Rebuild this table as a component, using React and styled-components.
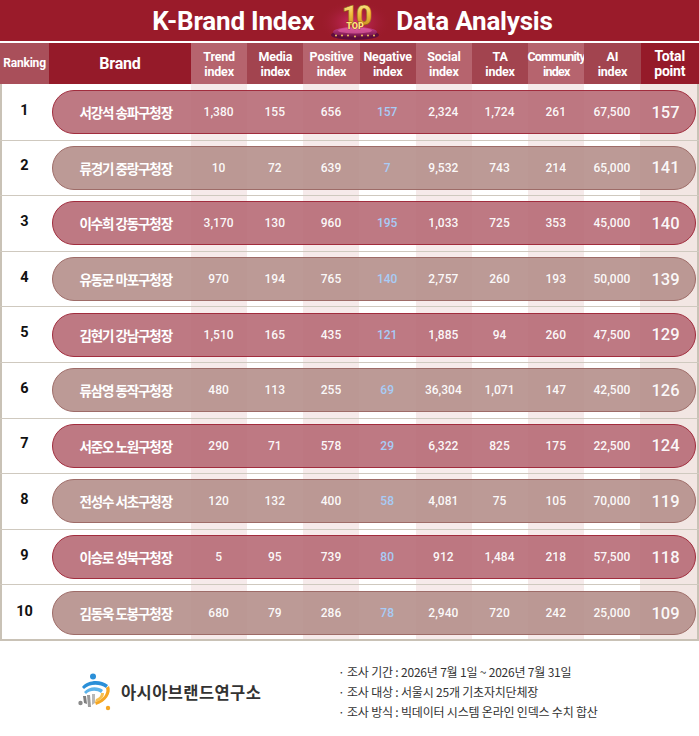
import React from "react";
import styled, { createGlobalStyle } from "styled-components";

const GlobalStyle = createGlobalStyle`
  body {
    margin: 0;
    background: #fff;
    font-family: Roboto, "Noto Sans CJK KR", sans-serif;
  }
`;

const STRIPES = [
  [0, 191, "#ffffff"],
  [191, 247, "#f6eaea"],
  [247, 303, "#ffffff"],
  [303, 359, "#f6eaea"],
  [359, 416, "#ffffff"],
  [416, 472, "#f6eaea"],
  [472, 528, "#ffffff"],
  [528, 584, "#f6eaea"],
  [584, 640, "#ffffff"],
  [640, 699, "#f2e6e3"],
];

const stripeGradient = () =>
  `linear-gradient(to right, ${STRIPES.map(
    ([a, b, c]) => `${c} ${a}px, ${c} ${b}px`
  ).join(", ")})`;

const HEAD_TONES = {
  rank: "#a94f5a",
  brand: "#951a29",
  light: "#b6646e",
  dark: "#a2444f",
  total: "#951a29",
};

const PILL = {
  odd: { bg: "rgba(183, 106, 117, 0.9)", border: "#a12d3e" },
  even: { bg: "rgba(181, 143, 139, 0.9)", border: "#9e6c68" },
};

const Page = styled.div`
  width: 699px;
  background: #fff;
`;

const TitleBar = styled.div`
  height: 41px;
  background: #9a1b2a;
  border-bottom: 2px solid #fff;
  display: flex;
  align-items: center;
  justify-content: center;
  gap: 8px;
  padding-left: 6px;
`;

const TitleText = styled.h1`
  margin: 0;
  color: #fff;
  font-family: Roboto, sans-serif;
  font-size: 26px;
  font-weight: 700;
  letter-spacing: -0.2px;
  line-height: 1;
`;

const HeaderRow = styled.div`
  display: grid;
  grid-template-columns: 49px 142px repeat(8, 56.2px) 1fr;
  height: 41px;
`;

const HeaderCell = styled.div`
  background: ${(p) => HEAD_TONES[p.$tone]};
  color: #fff;
  display: flex;
  align-items: center;
  justify-content: center;
  text-align: center;
  font-size: ${(p) => (p.$tone === "brand" ? "16px" : p.$tone === "total" ? "14px" : p.$tone === "rank" ? "12px" : "12.5px")};
  font-weight: 700;
  line-height: 15px;
  letter-spacing: ${(p) => (p.$tight ? "-0.8px" : "-0.2px")};
  white-space: pre-line;
`;

const Body = styled.div`
  background: ${stripeGradient};
  box-shadow: inset 2px 0 #c9c2b6, inset -2px 0 #c9c2b6, inset 0 -2px #c9c2b6;
  padding-top: 1px;
`;

const Row = styled.div`
  display: flex;
  align-items: center;
  height: 55.6px;
  box-sizing: border-box;
  border-bottom: 1.5px solid #cfc9bf;
  &:last-child {
    border-bottom: none;
  }
`;

const RankCell = styled.div`
  width: 49px;
  text-align: center;
  font-size: 14.5px;
  font-weight: 700;
  color: #111;
  padding-bottom: 4px;
`;

const Pill = styled.div`
  flex: 1;
  height: 44px;
  margin: 0 3px 0 3px;
  box-sizing: border-box;
  border-radius: 22px;
  border: 1.5px solid ${(p) => PILL[p.$variant].border};
  background: ${(p) => PILL[p.$variant].bg};
  display: grid;
  grid-template-columns: 137.5px repeat(8, 56.2px) 1fr;
  align-items: center;
  overflow: hidden;
`;

const BrandName = styled.div`
  text-align: center;
  color: #fff;
  font-family: "Noto Sans CJK KR", sans-serif;
  font-size: 13.5px;
  font-weight: 700;
  letter-spacing: -1.1px;
  padding-left: 8px;
`;

const Value = styled.div`
  text-align: center;
  color: ${(p) => (p.$negative ? "#a8ccf6" : "rgba(255,255,255,0.96)")};
  font-size: ${(p) => (p.$total ? "16.5px" : "12px")};
  font-weight: 500;
  padding-right: ${(p) => (p.$total ? "4px" : "0")};
`;

const Footer = styled.div`
  height: 96px;
  display: flex;
  align-items: center;
  padding: 6px 0 0 78px;
  box-sizing: border-box;
`;

const Brandmark = styled.div`
  width: 260px;
  display: flex;
  align-items: center;
  gap: 7px;
`;

const BrandmarkText = styled.span`
  font-family: "Noto Sans CJK KR", sans-serif;
  font-size: 16.5px;
  font-weight: 700;
  color: #333;
  letter-spacing: 0.4px;
`;

const Notes = styled.ul`
  margin: 0;
  padding: 0;
  list-style: none;
`;

const Note = styled.li`
  font-family: "Noto Sans CJK KR", sans-serif;
  font-size: 12px;
  line-height: 20px;
  color: #333;
  letter-spacing: -0.2px;
`;

const TopTen = () => (
  <svg width="66" height="41" viewBox="0 0 66 41">
    <defs>
      <radialGradient id="glow" cx="50%" cy="55%" r="55%">
        <stop offset="0%" stopColor="#e0307f" stopOpacity="0.85" />
        <stop offset="100%" stopColor="#9a1b2a" stopOpacity="0" />
      </radialGradient>
      <linearGradient id="gold" x1="0" y1="0" x2="0" y2="1">
        <stop offset="0%" stopColor="#fff6b0" />
        <stop offset="45%" stopColor="#f0c040" />
        <stop offset="100%" stopColor="#b87a14" />
      </linearGradient>
      <linearGradient id="ped" x1="0" y1="0" x2="0" y2="1">
        <stop offset="0%" stopColor="#d04590" />
        <stop offset="100%" stopColor="#6c0f45" />
      </linearGradient>
    </defs>
    <rect x="0" y="0" width="66" height="41" fill="url(#glow)" />
    <ellipse cx="33" cy="35" rx="24" ry="5" fill="#5e0c3c" />
    <ellipse cx="33" cy="32" rx="22" ry="5" fill="url(#ped)" />
    <ellipse cx="33" cy="30.5" rx="17" ry="3" fill="#e864a8" opacity="0.6" />
    {[14, 20, 26, 33, 40, 46, 52].map((x) => (
      <circle key={x} cx={x} cy={x === 33 ? 36.5 : 35.5} r="0.9" fill="#ffd860" />
    ))}
    <text
      x="34"
      y="25"
      textAnchor="middle"
      fontFamily="Roboto, sans-serif"
      fontWeight="900"
      fontSize="28"
      fill="url(#gold)"
      stroke="#8a5410"
      strokeWidth="0.5"
      letterSpacing="-2"
    >
      10
    </text>
    <text
      x="33"
      y="29"
      textAnchor="middle"
      fontFamily="Roboto, sans-serif"
      fontWeight="900"
      fontSize="9"
      fill="#ffe27a"
      stroke="#7a1020"
      strokeWidth="0.6"
      paintOrder="stroke"
    >
      TOP
    </text>
  </svg>
);

const InstituteLogo = () => (
  <svg width="36" height="38" viewBox="0 0 36 38">
    <circle cx="15" cy="3.5" r="3" fill="#2a8fd8" />
    <path d="M4 14 C 10 7, 22 6, 30 12 L 28 15 C 21 10, 11 11, 6 16 Z" fill="#2a8fd8" />
    <path d="M6 19 C 11 13, 20 13, 25 17 L 23 20 C 19 17, 12 17, 8 21 Z" fill="#5cb3ea" />
    <path d="M31 13 C 34 20, 28 29, 18 32 L 17 29 C 25 27, 30 20, 28 15 Z" fill="#f5a623" />
    <path d="M26 20 C 26 25, 22 28, 17 29 L 18 26 C 21 25, 23 23, 23 20 Z" fill="#f8c050" />
    <path d="M9 22 L 12 22 L 13 34 L 10 34 Z" fill="#9c9c9c" />
    <path d="M14 21 L 17 21 L 17 30 L 14 32 Z" fill="#b8b8b8" />
    <path d="M5 23 L 8 23 L 9 31 L 6 30 Z" fill="#7e7e7e" />
    <circle cx="2.5" cy="30" r="2.2" fill="#8a8a8a" />
    <circle cx="30" cy="35" r="2.2" fill="#f5a623" />
  </svg>
);

const HEADERS = [
  { label: "Ranking", tone: "rank" },
  { label: "Brand", tone: "brand" },
  { label: "Trend\nindex", tone: "light" },
  { label: "Media\nindex", tone: "dark" },
  { label: "Positive\nindex", tone: "light" },
  { label: "Negative\nindex", tone: "dark" },
  { label: "Social\nindex", tone: "light" },
  { label: "TA\nindex", tone: "dark" },
  { label: "Community\nindex", tone: "light", tight: true },
  { label: "AI\nindex", tone: "dark" },
  { label: "Total\npoint", tone: "total" },
];

const ROWS = [
  ["서강석 송파구청장", "1,380", "155", "656", "157", "2,324", "1,724", "261", "67,500", "157"],
  ["류경기 중랑구청장", "10", "72", "639", "7", "9,532", "743", "214", "65,000", "141"],
  ["이수희 강동구청장", "3,170", "130", "960", "195", "1,033", "725", "353", "45,000", "140"],
  ["유동균 마포구청장", "970", "194", "765", "140", "2,757", "260", "193", "50,000", "139"],
  ["김현기 강남구청장", "1,510", "165", "435", "121", "1,885", "94", "260", "47,500", "129"],
  ["류삼영 동작구청장", "480", "113", "255", "69", "36,304", "1,071", "147", "42,500", "126"],
  ["서준오 노원구청장", "290", "71", "578", "29", "6,322", "825", "175", "22,500", "124"],
  ["전성수 서초구청장", "120", "132", "400", "58", "4,081", "75", "105", "70,000", "119"],
  ["이승로 성북구청장", "5", "95", "739", "80", "912", "1,484", "218", "57,500", "118"],
  ["김동욱 도봉구청장", "680", "79", "286", "78", "2,940", "720", "242", "25,000", "109"],
];

const NOTES = [
  "· 조사 기간 : 2026년 7월 1일 ~ 2026년 7월 31일",
  "· 조사 대상 : 서울시 25개 기초자치단체장",
  "· 조사 방식 : 빅데이터 시스템 온라인 인덱스 수치 합산",
];

export default function App() {
  return (
    <>
      <GlobalStyle />
      <Page>
        <TitleBar>
          <TitleText>K-Brand Index</TitleText>
          <TopTen />
          <TitleText>Data Analysis</TitleText>
        </TitleBar>

        <HeaderRow>
          {HEADERS.map((h) => (
            <HeaderCell key={h.label} $tone={h.tone} $tight={h.tight}>
              {h.label}
            </HeaderCell>
          ))}
        </HeaderRow>

        <Body>
          {ROWS.map(([name, ...values], i) => (
            <Row key={name}>
              <RankCell>{i + 1}</RankCell>
              <Pill $variant={i % 2 === 0 ? "odd" : "even"}>
                <BrandName>{name}</BrandName>
                {values.map((v, j) => (
                  <Value key={j} $negative={j === 3} $total={j === 8}>
                    {v}
                  </Value>
                ))}
              </Pill>
            </Row>
          ))}
        </Body>

        <Footer>
          <Brandmark>
            <InstituteLogo />
            <BrandmarkText>아시아브랜드연구소</BrandmarkText>
          </Brandmark>
          <Notes>
            {NOTES.map((n) => (
              <Note key={n}>{n}</Note>
            ))}
          </Notes>
        </Footer>
      </Page>
    </>
  );
}
